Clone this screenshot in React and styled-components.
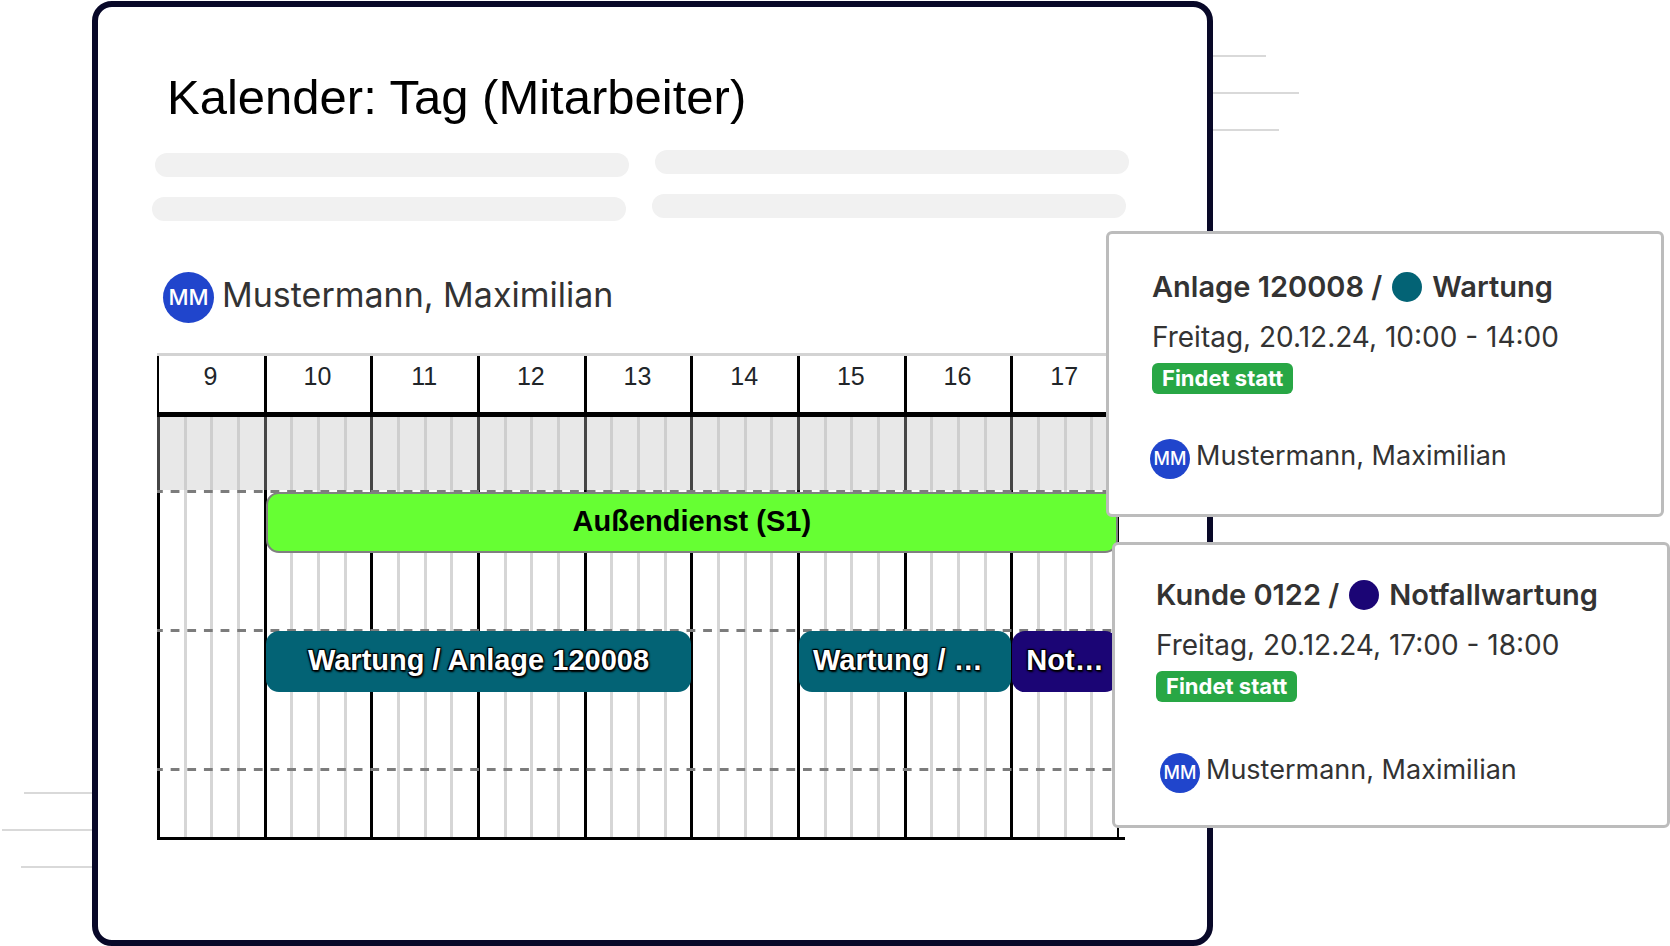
import styled, {createGlobalStyle} from 'styled-components';

const GlobalStyle = createGlobalStyle`
	* {
		box-sizing: border-box;
	}

	body {
		margin: 0;
		background: #fff;
		color: #333;
		font-family: Inter, 'Liberation Sans', sans-serif;
	}
`;

const Stage = styled.main`
	display: grid;
	grid-template-columns: 92px minmax(0, 1fr) 457px;
	padding-top: 1px;
`;

const Lines = styled.div`
	grid-row: 1;
	grid-column: ${props => (props.$side === 'left' ? 1 : 3)};
	align-self: ${props => (props.$side === 'left' ? 'end' : 'start')};
	display: flex;
	flex-direction: column;
	align-items: ${props => (props.$side === 'left' ? 'flex-end' : 'flex-start')};
	gap: 35px;
	padding: ${props => (props.$side === 'left' ? '0 0 78px' : '54px 0 0')};
`;

const Line = styled.span`
	width: ${props => props.$length}px;
	height: 2px;
	background: #d9d9d9;
`;

const Window = styled.section`
	grid-row: 1;
	grid-column: 2;
	padding: 62px 78px 100px 54px;
	border: 6px solid #080828;
	border-radius: 20px;
	background: #fff;
`;

const Title = styled.h1`
	margin: 0 0 25px 15px;
	color: #000;
	font: 400 49px/56px 'Liberation Sans', Arial, sans-serif;
`;

const Placeholders = styled.div`
	display: grid;
	grid-template-columns: 1fr 1fr;
	column-gap: 23px;
	margin-bottom: 51px;
`;

const PlaceholderColumn = styled.div`
	display: flex;
	flex-direction: column;
	gap: 20px;
	padding-top: ${props => props.$top}px;
`;

const Placeholder = styled.span`
	align-self: ${props => props.$align};
	width: calc(100% - 3px);
	height: 24px;
	border-radius: 12px;
	background: #f1f1f1;
`;

const Person = styled.div`
	display: flex;
	align-items: center;
	gap: ${props => (props.$large ? 8 : 6)}px;
	margin-left: ${props => props.$indent}px;
	font-size: ${props => (props.$large ? 34 : 27)}px;
	line-height: 40px;
	white-space: nowrap;
`;

const Avatar = styled.span`
	display: grid;
	place-items: center;
	flex: none;
	width: ${props => (props.$large ? 51 : 40)}px;
	height: ${props => (props.$large ? 51 : 40)}px;
	padding-bottom: 2px;
	border-radius: 50%;
	background: #2045cc;
	color: #fff;
	font-size: ${props => (props.$large ? 22 : 18)}px;
	font-weight: 500;
`;

const PersonName = styled.span`
	margin-bottom: 6px;
`;

const Timeline = styled.div`
	margin: 30px 4px 0 5px;
	padding-right: 6px;
	border-top: 3px solid #d3d3d3;
	border-bottom: 3px solid #000;
`;

const Chart = styled.div`
	display: grid;
	grid-template-columns: repeat(9, minmax(0, 1fr));
	grid-template-rows: 61px 73px 139px 139px 69px;
	border-right: 2px solid #000;
`;

const Hour = styled.div`
	grid-row: 1;
	grid-column: ${props => props.$column};
	padding: 5px 2px 0 0;
	border-left: ${props => (props.$column > 1 ? 3 : 2)}px solid #000;
	border-bottom: 5px solid #000;
	color: #212529;
	font: 400 25px/30px 'Liberation Sans', Arial, sans-serif;
	text-align: center;
`;

const Quarters = styled.div`
	grid-row: 2 / -1;
	grid-column: ${props => props.$column};
	display: grid;
	grid-template-columns: repeat(4, 1fr);
`;

const Quarter = styled.span`
	border-left: 3px solid #d6d6d6;

	&:first-child {
		border-color: #000;
	}

	${Quarters}:first-of-type &:first-child {
		border-left-width: 2px;
	}
`;

const Closed = styled.div`
	grid-row: 2;
	grid-column: 1 / -1;
	background: rgba(192, 192, 192, 0.36);
`;

const Lane = styled.div`
	grid-row: ${props => props.$row};
	grid-column: 1 / -1;
	display: grid;
	grid-template-columns: subgrid;
	align-items: start;
	padding-top: 2px;
	background: linear-gradient(90deg, #7c7c7c 54%, transparent 54%) -3px 0 / calc(100% / 173 * 3) 3px repeat-x;
`;

const Event = styled.div`
	grid-column: ${props => props.$start} / span ${props => props.$hours};
	height: 61px;
	margin: 0 -1px 0 2px;
	padding: 0 14px;
	border: ${props => (props.$outlined ? '2px solid #808080' : 'none')};
	border-radius: 13px;
	background: ${props => props.$color};
	color: ${props => (props.$outlined ? '#000' : '#fff')};
	font: 700 29px 'Liberation Sans', Arial, sans-serif;
	line-height: ${props => (props.$outlined ? 55 : 59)}px;
	text-align: ${props => (props.$hours > 2 ? 'center' : 'left')};
	text-shadow: ${props =>
		props.$outlined
			? 'none'
			: '-1px -1px 1px #000, 1px -1px 1px #000, -1px 1px 1px #000, 1px 2px 2px #000, 0 0 3px #000'};
	white-space: nowrap;
	overflow: hidden;
`;

const Details = styled.aside`
	grid-row: 1;
	grid-column: 2 / -1;
	justify-self: end;
	z-index: 1;
	display: flex;
	flex-direction: column;
	gap: 25px;
	width: 564px;
	padding-top: 230px;
`;

const Card = styled.article`
	width: 558px;
	height: 286px;
	align-self: ${props => props.$align};
	padding: ${props => props.$padding};
	border: 3px solid #bcbcbc;
	border-radius: 6px;
	background: #fff;
`;

const CardTitle = styled.h2`
	display: flex;
	align-items: center;
	margin: 0;
	font-size: 29px;
	font-weight: 600;
	line-height: 40px;
	white-space: nowrap;
`;

const Dot = styled.span`
	width: 30px;
	height: 30px;
	margin: 0 10px;
	border-radius: 50%;
	background: ${props => props.$color};
`;

const Time = styled.p`
	margin: 12px 0 8px;
	font-size: 28px;
	line-height: 36px;
	white-space: nowrap;
`;

const Badge = styled.span`
	display: block;
	width: fit-content;
	margin-bottom: ${props => props.$gap}px;
	padding: 0 10px;
	border-radius: 6px;
	background: #28a745;
	color: #fff;
	font-size: 22px;
	font-weight: 700;
	line-height: 31px;
`;

const hours = [9, 10, 11, 12, 13, 14, 15, 16, 17];

const lanes = [
	[
		{
			label: 'Außendienst (S1)',
			start: 10,
			hours: 8,
			color: '#66ff33',
			outlined: true
		}
	],
	[
		{label: 'Wartung / Anlage 120008', start: 10, hours: 4, color: '#036375'},
		{label: 'Wartung / …', start: 15, hours: 2, color: '#036375'},
		{label: 'Not…', start: 17, hours: 1, color: '#1b0575'}
	],
	[]
];

const Employee = ({large, indent}) => (
	<Person $large={large} $indent={indent}>
		<Avatar $large={large}>MM</Avatar>
		<PersonName>Mustermann, Maximilian</PersonName>
	</Person>
);

const Appointment = ({object, type, color, time, align, padding, gap, indent}) => (
	<Card $align={align} $padding={padding}>
		<CardTitle>
			{object} /<Dot $color={color} />
			{type}
		</CardTitle>
		<Time>{time}</Time>
		<Badge $gap={gap}>Findet statt</Badge>
		<Employee indent={indent} />
	</Card>
);

const App = () => {
	return (
		<>
			<GlobalStyle />
			<Stage>
				<Lines $side="left">
					<Line $length={68} />
					<Line $length={90} />
					<Line $length={71} />
				</Lines>
				<Lines $side="right">
					<Line $length={53} />
					<Line $length={86} />
					<Line $length={66} />
				</Lines>
				<Window>
					<Title>Kalender: Tag (Mitarbeiter)</Title>
					<Placeholders>
						<PlaceholderColumn $top={3}>
							<Placeholder $align="flex-end" />
							<Placeholder $align="flex-start" />
						</PlaceholderColumn>
						<PlaceholderColumn $top={0}>
							<Placeholder $align="flex-end" />
							<Placeholder $align="flex-start" />
						</PlaceholderColumn>
					</Placeholders>
					<Employee large indent={11} />
					<Timeline>
						<Chart>
							{hours.map((hour, index) => (
								<Hour key={hour} $column={index + 1}>
									{hour}
								</Hour>
							))}
							{hours.map((hour, index) => (
								<Quarters key={hour} $column={index + 1}>
									<Quarter />
									<Quarter />
									<Quarter />
									<Quarter />
								</Quarters>
							))}
							<Closed />
							{lanes.map((events, index) => (
								<Lane key={index} $row={index + 3}>
									{events.map(event => (
										<Event
											key={event.start}
											$start={event.start - hours[0] + 1}
											$hours={event.hours}
											$color={event.color}
											$outlined={event.outlined}
										>
											{event.label}
										</Event>
									))}
								</Lane>
							))}
						</Chart>
					</Timeline>
				</Window>
				<Details>
					<Appointment
						object="Anlage 120008"
						type="Wartung"
						color="#036375"
						time="Freitag, 20.12.24, 10:00 - 14:00"
						align="flex-start"
						padding="33px 43px 0"
						gap={42}
						indent={-2}
					/>
					<Appointment
						object="Kunde 0122"
						type="Notfallwartung"
						color="#1b0575"
						time="Freitag, 20.12.24, 17:00 - 18:00"
						align="flex-end"
						padding="30px 41px 0"
						gap={48}
						indent={4}
					/>
				</Details>
			</Stage>
		</>
	);
};

export default App;
